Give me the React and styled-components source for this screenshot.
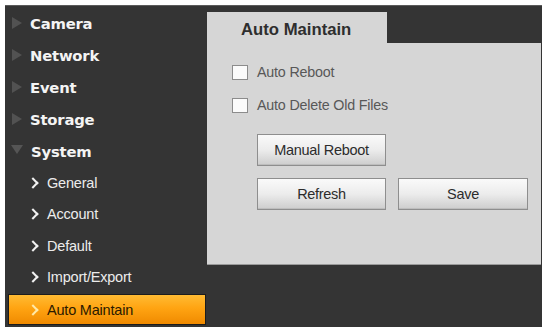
import React from "react";
import styled, { createGlobalStyle } from "styled-components";

const Global = createGlobalStyle`
  html, body { margin: 0; padding: 0; background: #ffffff; }
  body { font-family: "Liberation Sans", Arial, sans-serif; }
`;

const Frame = styled.div`
  margin: 6px 1px 0 5px;
  width: 537px;
  height: 321px;
  background: #343434;
  display: grid;
  grid-template-columns: 202px 1fr;
  box-shadow: 0 -1px 0 #5a5a5a;
`;

const Sidebar = styled.nav`
  display: flex;
  flex-direction: column;
  padding-top: 1px;
`;

const Category = styled.div`
  height: 32px;
  display: flex;
  align-items: center;
  gap: 8px;
  padding-left: 4px;
  font-family: "DejaVu Sans", Verdana, sans-serif;
  font-weight: bold;
  font-size: 14.8px;
  letter-spacing: -0.2px;
  color: #f4f4f4;
`;

const Tri = styled.span`
  width: 0;
  height: 0;
  ${(p) =>
    p.$open
      ? `border-left: 6px solid transparent; border-right: 6px solid transparent; border-top: 9px solid #555555; margin-top: -4px; margin-left: 2px;`
      : `border-top: 6px solid transparent; border-bottom: 6px solid transparent; border-left: 10px solid #525252; margin-left: 3px;`}
`;

const SubItem = styled.div`
  height: 31.5px;
  display: flex;
  align-items: center;
  box-sizing: border-box;
  padding-left: ${(p) => (p.$active ? "20px" : "24px")};
  margin: ${(p) => (p.$active ? "1px 1px 0 3px" : "0")};
  ${(p) =>
    p.$active
      ? `background: linear-gradient(#ffbb33, #ffa412 45%, #f08a00);
         border: 1px solid #1c1c1c;
         color: #2a1a00;
         height: 31px;`
      : `color: #ececec;`}
  font-size: 14.5px;
  letter-spacing: -0.2px;
`;

const Chevron = styled.span`
  display: inline-block;
  width: 6px;
  height: 6px;
  border-right: 2.2px solid ${(p) => (p.$active ? "#ffe9a8" : "#f2f2f2")};
  border-bottom: 2.2px solid ${(p) => (p.$active ? "#ffe9a8" : "#f2f2f2")};
  transform: rotate(-45deg);
  margin-right: 10px;
`;

const Main = styled.div`
  display: flex;
  flex-direction: column;
  padding-right: 1px;
`;

const TabBar = styled.div`
  height: 37px;
  display: flex;
  align-items: flex-end;
`;

const Tab = styled.div`
  width: 180px;
  height: 31px;
  background: #d6d6d6;
  display: flex;
  align-items: center;
  padding-left: 34px;
  box-sizing: border-box;
  font-weight: bold;
  font-size: 16.7px;
  color: #2e2e2e;
  padding-top: 4px;
`;

const Panel = styled.div`
  height: 222px;
  background: #d6d6d6;
  padding: 21px 0 0 25px;
  box-sizing: border-box;
  border-bottom: 1px solid #9a9a9a;
`;

const CheckRow = styled.label`
  display: flex;
  align-items: center;
  gap: 9px;
  height: 16px;
  margin-bottom: ${(p) => p.$mb || "0"};
  font-size: 14.3px;
  color: #585858;
  letter-spacing: -0.2px;
`;

const Box = styled.span`
  width: 14px;
  height: 13px;
  background: #fbfbfb;
  border: 1px solid #8c8c8c;
`;

const Buttons = styled.div`
  display: grid;
  grid-template-columns: 129px 130px;
  column-gap: 12px;
  row-gap: 12px;
  margin: 21px 0 0 25px;
`;

const Button = styled.button`
  height: 32px;
  box-sizing: border-box;
  border: 1px solid #8e8e8e;
  background: linear-gradient(#fafafa, #ececec 50%, #cdcdcd);
  box-shadow: inset 0 -1px 0 #bdbdbd;
  font-family: "Liberation Sans", Arial, sans-serif;
  font-size: 14.5px;
  color: #2c2c2c;
  letter-spacing: -0.3px;
  padding: 0;
  grid-column: ${(p) => p.$col || "auto"};
`;

const categories = ["Camera", "Network", "Event", "Storage"];
const subs = ["General", "Account", "Default", "Import/Export", "Auto Maintain"];

export default function App() {
  return (
    <>
      <Global />
      <Frame>
        <Sidebar>
          {categories.map((c) => (
            <Category key={c}>
              <Tri />
              {c}
            </Category>
          ))}
          <Category>
            <Tri $open />
            System
          </Category>
          {subs.map((s) => {
            const active = s === "Auto Maintain";
            return (
              <SubItem key={s} $active={active}>
                <Chevron $active={active} />
                {s}
              </SubItem>
            );
          })}
        </Sidebar>
        <Main>
          <TabBar>
            <Tab>Auto Maintain</Tab>
          </TabBar>
          <Panel>
            <CheckRow $mb="17px">
              <Box />
              Auto Reboot
            </CheckRow>
            <CheckRow>
              <Box />
              Auto Delete Old Files
            </CheckRow>
            <Buttons>
              <Button $col="1 / 2">Manual Reboot</Button>
              <span />
              <Button>Refresh</Button>
              <Button>Save</Button>
            </Buttons>
          </Panel>
        </Main>
      </Frame>
    </>
  );
}
